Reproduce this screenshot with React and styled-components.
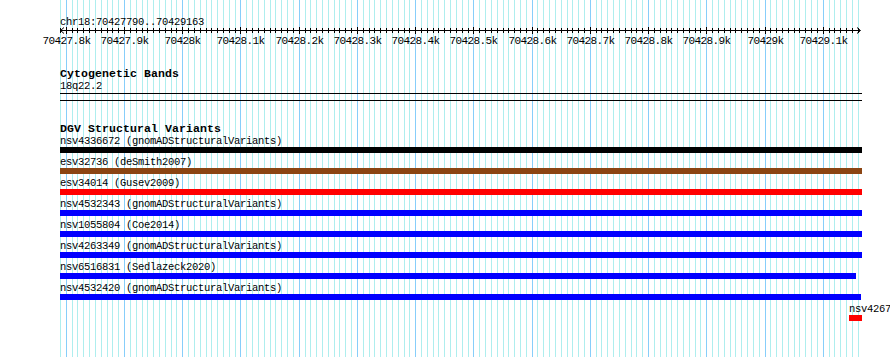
import styled, { createGlobalStyle } from 'styled-components'

const START = 70427790
const END = 70429163
const SCALE = 800 / (END - START + 1)
const toX = (bp) => Math.round((bp - START) * SCALE)

const MINOR = '#aeeeee'
const MAJOR = '#87cefa'

const gridLines = []
for (let bp = START; bp <= END; bp += 10) {
  gridLines.push({ x: toX(bp), major: bp % 100 === 0 })
}

const gridBackground = `linear-gradient(to right, ${gridLines
  .map(({ x, major }) => {
    const c = major ? MAJOR : MINOR
    return `transparent ${x}px, ${c} ${x}px, ${c} ${x + 1}px, transparent ${x + 1}px`
  })
  .join(', ')})`

const tickLabels = []
for (let bp = 70427800; bp <= END; bp += 100) {
  tickLabels.push({ x: toX(bp), text: `${parseFloat((bp / 1000).toFixed(1))}k` })
}

const features = [
  { name: 'nsv4336672', source: 'gnomADStructuralVariants', color: '#000000', x: 0, w: 802 },
  { name: 'esv32736', source: 'deSmith2007', color: '#8b4513', x: 0, w: 802 },
  { name: 'esv34014', source: 'Gusev2009', color: '#ff0000', x: 0, w: 802 },
  { name: 'nsv4532343', source: 'gnomADStructuralVariants', color: '#0000ff', x: 0, w: 802 },
  { name: 'nsv1055804', source: 'Coe2014', color: '#0000ff', x: 0, w: 802 },
  { name: 'nsv4263349', source: 'gnomADStructuralVariants', color: '#0000ff', x: 0, w: 802 },
  { name: 'nsv6516831', source: 'Sedlazeck2020', color: '#0000ff', x: 0, w: 796 },
  { name: 'nsv4532420', source: 'gnomADStructuralVariants', color: '#0000ff', x: 0, w: 801 },
  { name: 'nsv4267', color: '#ff0000', x: 789, w: 13 },
]

const GlobalStyle = createGlobalStyle`
  body {
    margin: 0;
    background: #ffffff;
  }
`

const Panel = styled.div`
  width: 890px;
  height: 357px;
  padding-left: 60px;
  box-sizing: border-box;
  overflow: hidden;
  background: #ffffff;
  font-family: "Liberation Mono", "DejaVu Sans Mono", monospace;
  color: #000000;
`

const Lane = styled.div`
  width: 802px;
  height: 100%;
  padding-top: 16px;
  box-sizing: border-box;
  display: flex;
  flex-direction: column;
  background-image: ${gridBackground};
  background-repeat: no-repeat;
`

const SmallText = styled.div`
  font-size: 10.5px;
  line-height: 12px;
  letter-spacing: -0.3px;
  white-space: nowrap;
`

const RulerSvg = styled.svg`
  display: block;
  overflow: visible;
  font-family: "Liberation Mono", "DejaVu Sans Mono", monospace;
  font-size: 11px;
  letter-spacing: -0.6px;
`

const Track = styled.section`
  display: flex;
  flex-direction: column;
  margin-top: ${(p) => p.$gap}px;
`

const TrackTitle = styled.h3`
  margin: 0;
  font-size: 11.5px;
  line-height: 13px;
  font-weight: bold;
  letter-spacing: 0.1px;
  white-space: nowrap;
`

const BandBox = styled.div`
  margin-top: 1px;
  height: 6px;
  border-top: 1px solid #000000;
  border-bottom: 1px solid #000000;
`

const FeatureList = styled.div`
  display: flex;
  flex-direction: column;
  gap: 3px;
`

const FeatureRow = styled.div`
  margin-left: ${(p) => p.$x}px;
  width: ${(p) => p.$w}px;
`

const FeatureBar = styled.div`
  height: 6px;
  background: ${(p) => p.$color};
`

function Ruler() {
  return (
    <RulerSvg width="802" height="20" viewBox="0 0 802 20">
      <g stroke="#000" strokeWidth="1" shapeRendering="crispEdges">
        <line x1="0" y1="2.5" x2="800" y2="2.5" />
        {gridLines.map((l) => (
          <line
            key={l.x}
            x1={l.x + 0.5}
            x2={l.x + 0.5}
            y1={l.major ? -1 : 0}
            y2={l.major ? 6 : 5}
          />
        ))}
      </g>
      <g stroke="#000" fill="none" strokeWidth="1">
        <polyline points="4,-0.5 0.5,2.5 4,5.5" />
        <polyline points="797,-0.5 800.5,2.5 797,5.5" />
      </g>
      {tickLabels.map((t) => (
        <text key={t.text} x={t.x + 0.5} y="16" textAnchor="middle" fill="#000">
          {t.text}
        </text>
      ))}
    </RulerSvg>
  )
}

export default function App() {
  return (
    <>
      <GlobalStyle />
      <Panel>
        <Lane>
          <SmallText>chr18:70427790..70429163</SmallText>
          <Ruler />
          <Track $gap={19}>
            <TrackTitle>Cytogenetic Bands</TrackTitle>
            <SmallText>18q22.2</SmallText>
            <BandBox />
          </Track>
          <Track $gap={21}>
            <TrackTitle>DGV Structural Variants</TrackTitle>
            <FeatureList>
              {features.map((f) => (
                <FeatureRow key={f.name} $x={f.x} $w={f.w}>
                  <SmallText>
                    {f.source ? `${f.name} (${f.source})` : f.name}
                  </SmallText>
                  <FeatureBar $color={f.color} />
                </FeatureRow>
              ))}
            </FeatureList>
          </Track>
        </Lane>
      </Panel>
    </>
  )
}
